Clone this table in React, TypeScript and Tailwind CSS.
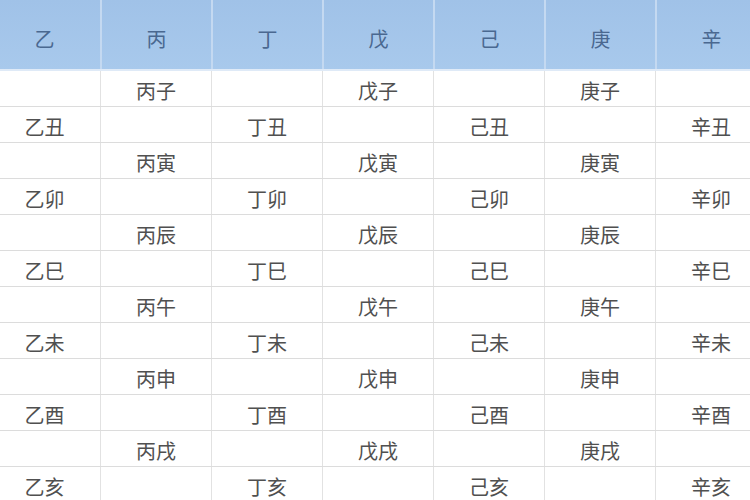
const heads = ['乙', '丙', '丁', '戊', '己', '庚', '辛']
const odd = ['子', '寅', '辰', '午', '申', '戌']
const even = ['丑', '卯', '巳', '未', '酉', '亥']

// 12 rows: even rows fill 丙/戊/庚, odd rows fill 乙/丁/己/辛
const rows = Array.from({ length: 12 }).map((_, r) => {
  const i = Math.floor(r / 2)
  return heads.map((h, c) => {
    if (r % 2 === 0) return c % 2 === 1 ? h + odd[i] : ''
    return c % 2 === 0 ? h + even[i] : ''
  })
})

export default function App() {
  return (
    <div
      className="w-[750px] h-[500px] overflow-hidden bg-white"
      style={{ fontFamily: '"Noto Sans CJK SC", "Noto Sans", sans-serif' }}
    >
      <div className="-ml-[11px] w-[777px]">
        {/* Header */}
        <div className="grid grid-cols-[repeat(7,111px)] h-[71px] border-b-2 border-[#dfeaf7]">
          {heads.map((h, i) => (
            <div
              key={h}
              className={`flex items-center justify-center pt-[8px] bg-gradient-to-b from-[#a0c2e8] to-[#a8c9ec] text-[20px] text-[#4a6890]
                ${i > 0 ? 'border-l-2 border-[#c4d9f1]' : ''}`}
            >
              {h}
            </div>
          ))}
        </div>

        {/* Body */}
        {rows.map((row, r) => (
          <div key={r} className="grid grid-cols-[repeat(7,111px)] h-[36px] border-b border-[#dcdcdc]">
            {row.map((cell, c) => (
              <div
                key={c}
                className={`flex items-center justify-center pt-[5px] text-[20px] text-[#505050]
                  ${c > 0 ? 'border-l border-[#e2e2e2]' : ''}`}
              >
                {cell}
              </div>
            ))}
          </div>
        ))}
      </div>
    </div>
  )
}
